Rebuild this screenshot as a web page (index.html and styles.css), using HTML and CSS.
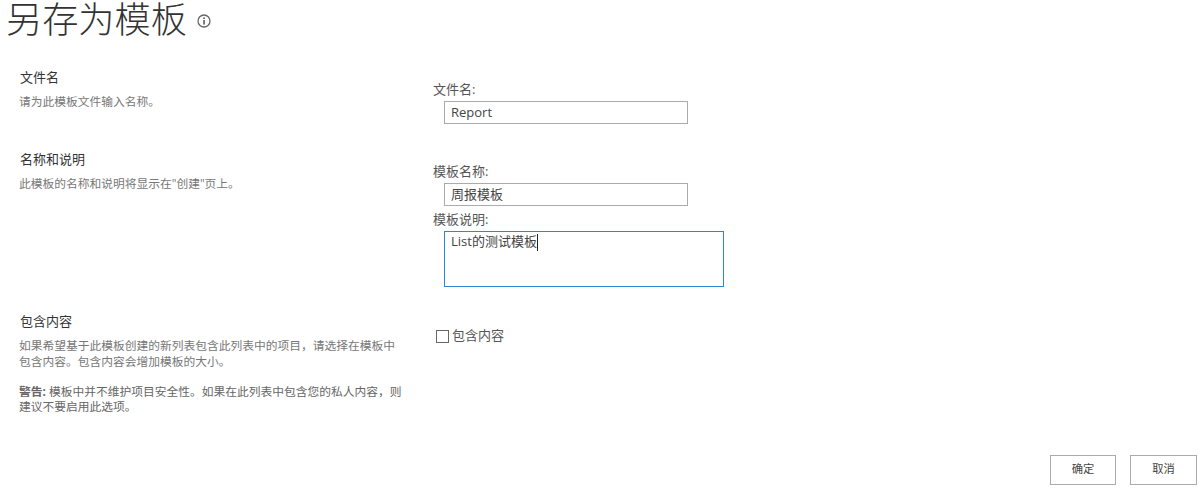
FILE: index.html
```html
<!DOCTYPE html>
<html lang="zh-CN">
<head>
    <meta charset="UTF-8">
    <title>另存为模板</title>
    <link rel="stylesheet" href="styles.css">
</head>
<body>
    <div class="title-row">
        <h1>另存为模板</h1>
        <svg class="info-icon" width="14" height="14" viewBox="0 0 14 14">
            <circle cx="7" cy="7" r="6" fill="none" stroke="#666" stroke-width="1.3"/>
            <rect x="6.2" y="6" width="1.7" height="4.6" fill="#666"/>
            <rect x="6.2" y="3.4" width="1.7" height="1.6" fill="#666"/>
        </svg>
    </div>

    <div class="section section-file">
        <div class="section-info">
            <h3>文件名</h3>
            <p>请为此模板文件输入名称。</p>
        </div>
        <div class="section-body">
            <label class="field-label">文件名:</label>
            <input class="text-input" type="text" value="Report">
        </div>
    </div>

    <div class="section section-name">
        <div class="section-info">
            <h3>名称和说明</h3>
            <p>此模板的名称和说明将显示在"创建"页上。</p>
        </div>
        <div class="section-body">
            <label class="field-label">模板名称:</label>
            <input class="text-input" type="text" value="周报模板">
            <label class="field-label label-second">模板说明:</label>
            <div class="text-area">List的测试模板<span class="caret"></span></div>
        </div>
    </div>

    <div class="section section-content">
        <div class="section-info">
            <h3>包含内容</h3>
            <p>如果希望基于此模板创建的新列表包含此列表中的项目，请选择在模板中包含内容。包含内容会增加模板的大小。</p>
            <p class="warning"><b>警告:</b> 模板中并不维护项目安全性。如果在此列表中包含您的私人内容，则建议不要启用此选项。</p>
        </div>
        <div class="section-body">
            <label class="check-row"><input class="check-box" type="checkbox">包含内容</label>
        </div>
    </div>

    <div class="button-row">
        <button class="btn">确定</button>
        <button class="btn">取消</button>
    </div>
</body>
</html>
```

FILE: styles.css
```css
html, body {
    height: 489px;
    overflow: hidden;
}
body {
    margin: 0;
    background: #fff;
    color: #444;
    font-family: "Open Sans", "Noto Sans CJK SC", sans-serif;
    font-size: 13px;
}
.title-row {
    display: flex;
    align-items: center;
    gap: 10px;
    height: 38px;
    padding-left: 6px;
}
h1 {
    margin: 0;
    color: #333;
    font-size: 36.2px;
    font-weight: 300;
    line-height: 38px;
}
.info-icon {
    margin-top: 4px;
}
.section {
    display: grid;
    grid-template-columns: 433px 1fr;
}
.section-file {
    height: 82px;
    padding-top: 31px;
}
.section-name {
    height: 162px;
}
.section-info {
    padding-left: 19px;
    width: 386px;
}
.section-info h3 {
    margin: 0 0 8px;
    padding-left: 1px;
    color: #333;
    font-size: 13px;
    font-weight: 400;
    line-height: 17px;
}
.section-info p {
    margin: 0;
    color: #777;
    font-size: 11.75px;
    line-height: 15.5px;
}
.section-info .warning {
    margin-top: 14.5px;
    color: #666;
    line-height: 15px;
}
.warning b {
    font-weight: 700;
}
.section-body {
    padding-top: 12px;
}
.field-label {
    display: block;
    margin-bottom: 3px;
    color: #555;
    line-height: 17px;
}
.label-second {
    margin-top: 5px;
}
.text-input,
.text-area {
    display: block;
    box-sizing: border-box;
    margin: 0 0 0 11px;
    padding: 0 6px;
    color: #444;
    font: inherit;
    background: #fff;
}
.text-input {
    width: 244px;
    height: 23px;
    padding-bottom: 2px;
    border: 1px solid #ababab;
    outline: none;
}
.text-area {
    width: 280px;
    height: 56px;
    border: 1px solid #2b88d8;
    line-height: 19px;
}
.caret {
    display: inline-block;
    width: 1px;
    height: 17px;
    margin-top: 2px;
    vertical-align: top;
    background: #222;
}
.check-row {
    display: flex;
    align-items: center;
    gap: 3px;
    margin-top: 1px;
    margin-left: 3px;
    color: #555;
    line-height: 19px;
}
.check-box {
    appearance: none;
    box-sizing: border-box;
    width: 13px;
    height: 13px;
    margin: 2px 0 0;
    border: 1px solid #666;
    background: #fff;
}
.button-row {
    display: flex;
    justify-content: flex-end;
    gap: 14px;
    margin-top: 41px;
    padding-right: 2px;
}
.btn {
    box-sizing: border-box;
    width: 66px;
    height: 30px;
    padding: 0 0 3px;
    border: 1px solid #ababab;
    background: #fff;
    color: #444;
    font: inherit;
    font-size: 11.3px;
}
.btn + .btn {
    width: 67px;
}
```
